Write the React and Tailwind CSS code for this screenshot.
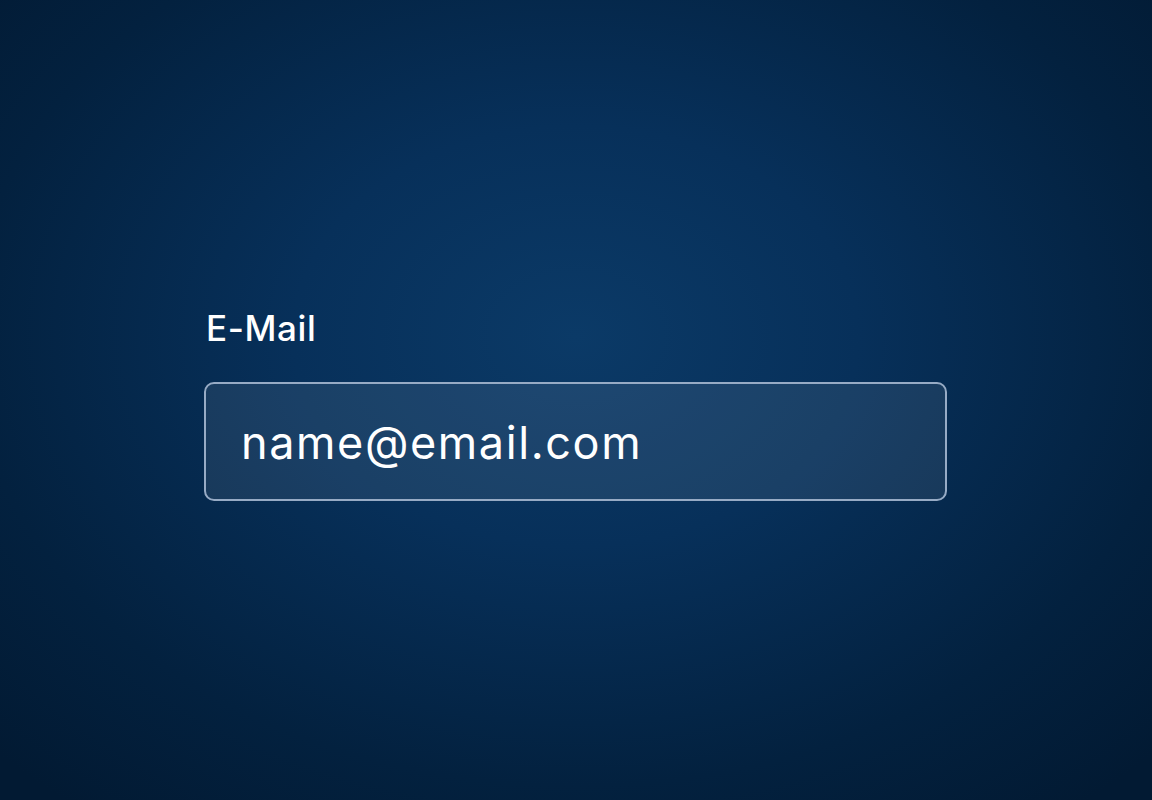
export default function App() {
  return (
    <div className="w-full h-[800px] overflow-hidden bg-[radial-gradient(ellipse_70%_75%_at_50%_42%,#0b3a67_0%,#07305a_35%,#03213f_75%,#021a33_100%)] pl-[204px] pt-[306px]" style={{ fontFamily: "Inter, 'Noto Sans', sans-serif" }}>
      <div className="w-[743px] flex flex-col">
        <label className="text-[35px] leading-[44px] font-medium text-white pl-[2px] tracking-[0.6px]">E-Mail</label>
        <div className="mt-[32px] h-[119px] rounded-[10px] border-2 border-[#97abc5] bg-white/[0.08] flex items-center pl-[35px]">
          <span className="text-[45px] font-normal text-white tracking-[1.6px] pt-[3px]">name@email.com</span>
        </div>
      </div>
    </div>
  );
}
